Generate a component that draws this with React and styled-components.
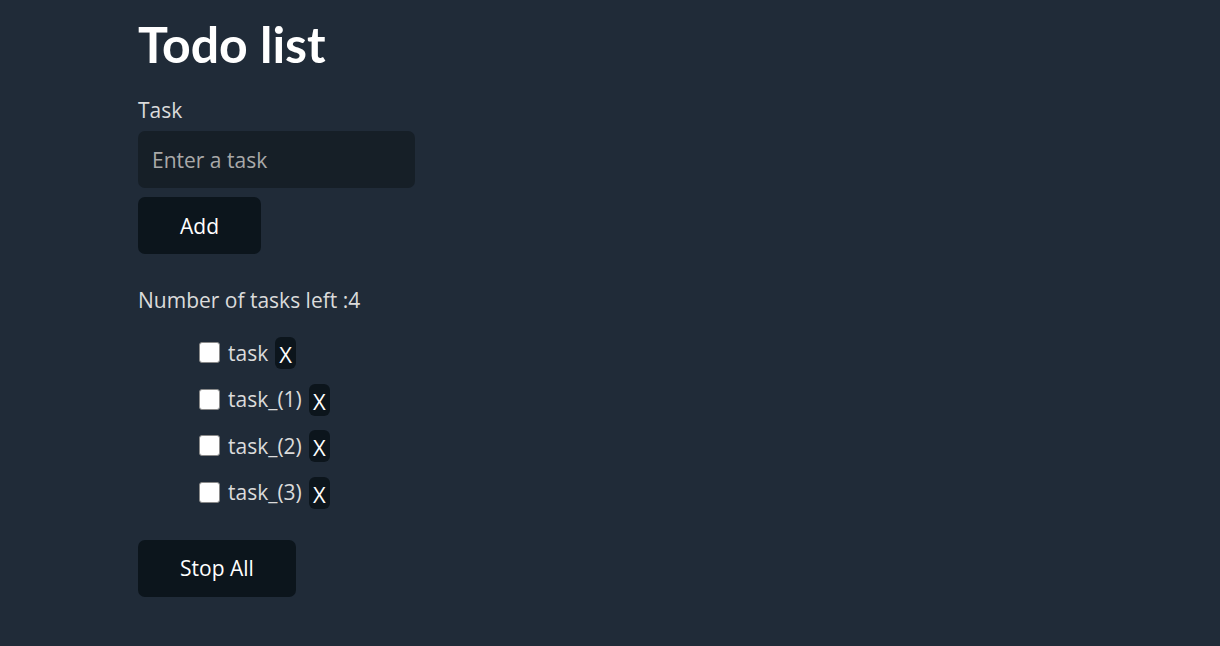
import React, { useState } from "react";
import styled, { createGlobalStyle } from "styled-components";

const Global = createGlobalStyle`
  html, body { margin: 0; padding: 0; background: #202b38; }
  body { font-family: "Open Sans", Lato, sans-serif; color: #dbdbdb; }
  #root { min-height: 646px; }
`;

const Page = styled.main`
  display: flex;
  flex-direction: column;
  align-items: flex-start;
  padding: 14px 0 0 138px;
  min-height: 646px;
  box-sizing: border-box;
  background: #202b38;
`;

const Title = styled.h1`
  margin: 0;
  font-family: Lato, "Open Sans", sans-serif;
  font-size: 50px;
  line-height: 60px;
  font-weight: 700;
  color: #ffffff;
`;

const Label = styled.label`
  margin-top: 24px;
  font-size: 21px;
  line-height: 24px;
  color: #dbdbdb;
`;

const Input = styled.input`
  margin-top: 9px;
  box-sizing: border-box;
  width: 277px;
  height: 57px;
  padding: 0 14px;
  border: none;
  border-radius: 7px;
  background: #161f27;
  color: #dbdbdb;
  font-family: inherit;
  font-size: 21px;
  outline: none;
  &::placeholder { color: #a9a9a9; }
`;

const Button = styled.button`
  margin-top: ${(p) => p.$mt || 0}px;
  box-sizing: border-box;
  width: ${(p) => p.$w}px;
  height: 57px;
  border: none;
  border-radius: 7px;
  background: #0c151c;
  color: #ffffff;
  font-family: inherit;
  font-size: 21px;
  cursor: pointer;
`;

const Count = styled.p`
  margin: 34px 0 0;
  font-size: 21px;
  line-height: 24px;
`;

const List = styled.ul`
  list-style: none;
  margin: 25px 0 0;
  padding: 0 0 0 61px;
  display: flex;
  flex-direction: column;
  gap: 14.67px;
`;

const Row = styled.li`
  display: flex;
  align-items: center;
  height: 32px;
`;

const Check = styled.input.attrs({ type: "checkbox" })`
  appearance: none;
  margin: 0 8px 1px 0;
  width: 21px;
  height: 21px;
  box-sizing: border-box;
  background: #ffffff;
  border: 1px solid #8a8a8a;
  border-radius: 3px;
`;

const TaskText = styled.span`
  font-size: 21px;
  line-height: 24px;
  margin-right: 7px;
  padding-bottom: 1px;
`;

const RemoveButton = styled.button`
  box-sizing: border-box;
  height: 32px;
  padding: 3px 3px 0;
  min-width: 21px;
  border: none;
  border-radius: 6px;
  background: #0c151c;
  color: #ffffff;
  font-family: inherit;
  font-size: 22px;
  line-height: 29px;
  cursor: pointer;
`;

export default function App() {
  const [tasks] = useState(["task", "task_(1)", "task_(2)", "task_(3)"]);
  return (
    <>
      <Global />
      <Page>
        <Title>Todo list</Title>
        <Label htmlFor="task">Task</Label>
        <Input id="task" placeholder="Enter a task" />
        <Button $w={123} $mt={9}>Add</Button>
        <Count>Number of tasks left :{tasks.length}</Count>
        <List>
          {tasks.map((t) => (
            <Row key={t}>
              <Check />
              <TaskText>{t}</TaskText>
              <RemoveButton>X</RemoveButton>
            </Row>
          ))}
        </List>
        <Button $w={158} $mt={31}>Stop All</Button>
      </Page>
    </>
  );
}
